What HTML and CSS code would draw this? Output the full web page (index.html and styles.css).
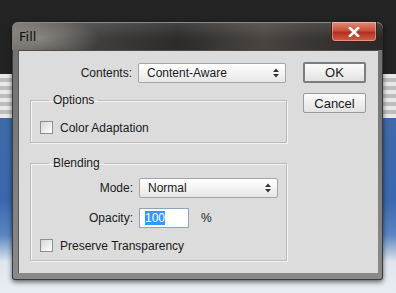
FILE: index.html
```html
<!DOCTYPE html>
<html>
<head>
    <title>Fill</title>
    <link rel="stylesheet" href="styles.css">
</head>
<body>
    <div class="desktop">
        <div class="window">
            <div class="titlebar">
                <span class="title">Fill</span>
                <span class="close">
                    <svg width="12" height="10" viewBox="0 0 12 10"><path d="M2 1 L10 9 M10 1 L2 9" stroke="#fff" stroke-width="2.6" stroke-linecap="square"/></svg>
                </span>
            </div>
            <div class="client">
                <div class="left">
                    <div class="row first">
                        <label class="lbl">Contents:</label>
                        <div class="select wide">
                            <span>Content-Aware</span>
                            <svg class="arrows" width="6" height="10" viewBox="0 0 6 10"><path d="M0 4 L3 0.5 L6 4 Z M0 6 L3 9.5 L6 6 Z" fill="#333"/></svg>
                        </div>
                    </div>

                    <fieldset class="group options">
                        <legend>Options</legend>
                        <div class="check">
                            <span class="box"></span>
                            <span>Color Adaptation</span>
                        </div>
                    </fieldset>

                    <fieldset class="group blending">
                        <legend>Blending</legend>
                        <div class="row">
                            <label class="lbl">Mode:</label>
                            <div class="select mode">
                                <span>Normal</span>
                                <svg class="arrows" width="6" height="10" viewBox="0 0 6 10"><path d="M0 4 L3 0.5 L6 4 Z M0 6 L3 9.5 L6 6 Z" fill="#333"/></svg>
                            </div>
                        </div>
                        <div class="row opacity">
                            <label class="lbl">Opacity:</label>
                            <div class="input"><span class="sel">100</span></div>
                            <span class="pct">%</span>
                        </div>
                        <div class="check last">
                            <span class="box"></span>
                            <span>Preserve Transparency</span>
                        </div>
                    </fieldset>
                </div>
                <div class="buttons">
                    <div class="btn default">OK</div>
                    <div class="btn">Cancel</div>
                </div>
            </div>
        </div>
    </div>
</body>
</html>
```

FILE: styles.css
```css
body {
    margin: 0;
    font-family: "Liberation Sans", Arial, sans-serif;
    font-size: 12px;
    color: #1a1a1a;
}

/* Desktop behind the dialog */
.desktop {
    width: 396px;
    height: 293px;
    overflow: hidden;
    padding: 22px 0 0 12px;
    box-sizing: border-box;
    background:
        repeating-linear-gradient(to bottom, #e9e9e9 0 4px, #bdbdbd 4px 8px) 0 74px / 100% 44px no-repeat,
        linear-gradient(to bottom, #232323 0 74px, #3f6aa8 118px, #3b68ad 200px, #5a85c0 235px, #dfe6ee 262px, #e8edf2 100%);
}

.window {
    width: 371px;
    height: 258px;
    border-radius: 6px 6px 3px 3px;
    background: linear-gradient(to bottom, #6e6e6e, #8a8a8a);
    box-shadow: 0 2px 5px rgba(0, 0, 0, 0.6), inset 0 0 0 1px #3a3a3a;
    display: flex;
    flex-direction: column;
}

.titlebar {
    height: 28px;
    display: flex;
    align-items: flex-start;
    justify-content: space-between;
    border-radius: 6px 6px 0 0;
    background:
        radial-gradient(ellipse 60px 22px at 28px 16px, rgba(200, 196, 190, 0.45), rgba(200, 196, 190, 0)),
        linear-gradient(to bottom, rgba(255, 255, 255, 0.12), rgba(255, 255, 255, 0) 60%),
        linear-gradient(to right, #6a6764 0, #4e4b49 10%, #3a3837 30%, #2c2b2a 45%, #4a4541 68%, #3a3634 80%, #2a2928 100%);
    box-shadow: inset 0 1px 0 #8a8a8a, inset 1px 0 0 #7a7a7a;
}

.title {
    color: #101010;
    font-family: "DejaVu Sans", sans-serif;
    font-size: 13px;
    margin: 7px 0 0 7px;
}

.close {
    width: 46px;
    height: 20px;
    margin-right: 6px;
    box-sizing: border-box;
    border: 1px solid #4a1a14;
    border-top: none;
    border-radius: 0 0 4px 4px;
    background: linear-gradient(to bottom, #e58a78 0, #c9513c 45%, #b3301d 55%, #d0614a 100%);
    box-shadow: inset 0 0 0 1px rgba(255, 255, 255, 0.35);
    display: flex;
    align-items: center;
    justify-content: center;
}

.client {
    flex: 1;
    margin: 0 5px 7px 6px;
    background: #dcdcdc;
    border-top: 1px solid #4c4c4c;
    border-left: 1px solid #5c5c5c;
    display: flex;
    padding: 11px 0 0 11px;
}

.left {
    width: 257px;
}

.row {
    display: flex;
    align-items: center;
    height: 20px;
}

.row.first {
    margin-top: 1px;
}

.lbl {
    width: 102px;
    text-align: right;
    margin-right: 6px;
}

.select {
    height: 20px;
    box-sizing: border-box;
    border: 1px solid #a5a5a5;
    border-radius: 2px;
    background: linear-gradient(to bottom, #ffffff, #f1f1f1 60%, #e6e6e6);
    display: flex;
    align-items: center;
    justify-content: space-between;
    padding: 0 6px 0 8px;
}

.select.wide {
    width: 148px;
}

.select.mode {
    width: 139px;
}

.group {
    margin: 10px 0 0 0;
    padding: 0;
    border: 1px solid #b9b9b9;
    box-shadow: inset 1px 1px 0 #f4f4f4, 1px 1px 0 #f4f4f4;
}

.group legend {
    margin-left: 18px;
    padding: 0 4px;
    line-height: 14px;
}

.options {
    height: 50px;
    box-sizing: border-box;
}

.blending {
    margin-top: 13px;
    height: 105px;
    box-sizing: border-box;
}

.check {
    display: flex;
    align-items: center;
    height: 13px;
    padding-left: 9px;
    margin-top: 14px;
}

.box {
    width: 13px;
    height: 13px;
    box-sizing: border-box;
    border: 1px solid #8e8e8e;
    background: linear-gradient(135deg, #d6d6d6, #ffffff);
    margin-right: 7px;
}

.blending .row {
    margin-top: 8px;
}

.blending .row.opacity {
    margin-top: 10px;
}

.check.last {
    margin-top: 11px;
}

.input {
    width: 50px;
    height: 20px;
    box-sizing: border-box;
    border: 1px solid #8fa2bb;
    background: #fff;
    padding: 2px 0 0 5px;
}

.sel {
    background: #3399ff;
    color: #fff;
    display: inline-block;
    line-height: 14px;
}

.pct {
    margin-left: 12px;
}

.buttons {
    margin-left: 16px;
    width: 63px;
}

.btn {
    height: 20px;
    box-sizing: border-box;
    border: 1px solid #9a9a9a;
    border-radius: 2px;
    background: linear-gradient(to bottom, #fbfbfb, #efefef 50%, #e2e2e2);
    display: flex;
    align-items: center;
    justify-content: center;
    font-size: 13px;
}

.btn.default {
    height: 21px;
    border: 2px solid #7c7c7c;
    margin-bottom: 10px;
}
```
